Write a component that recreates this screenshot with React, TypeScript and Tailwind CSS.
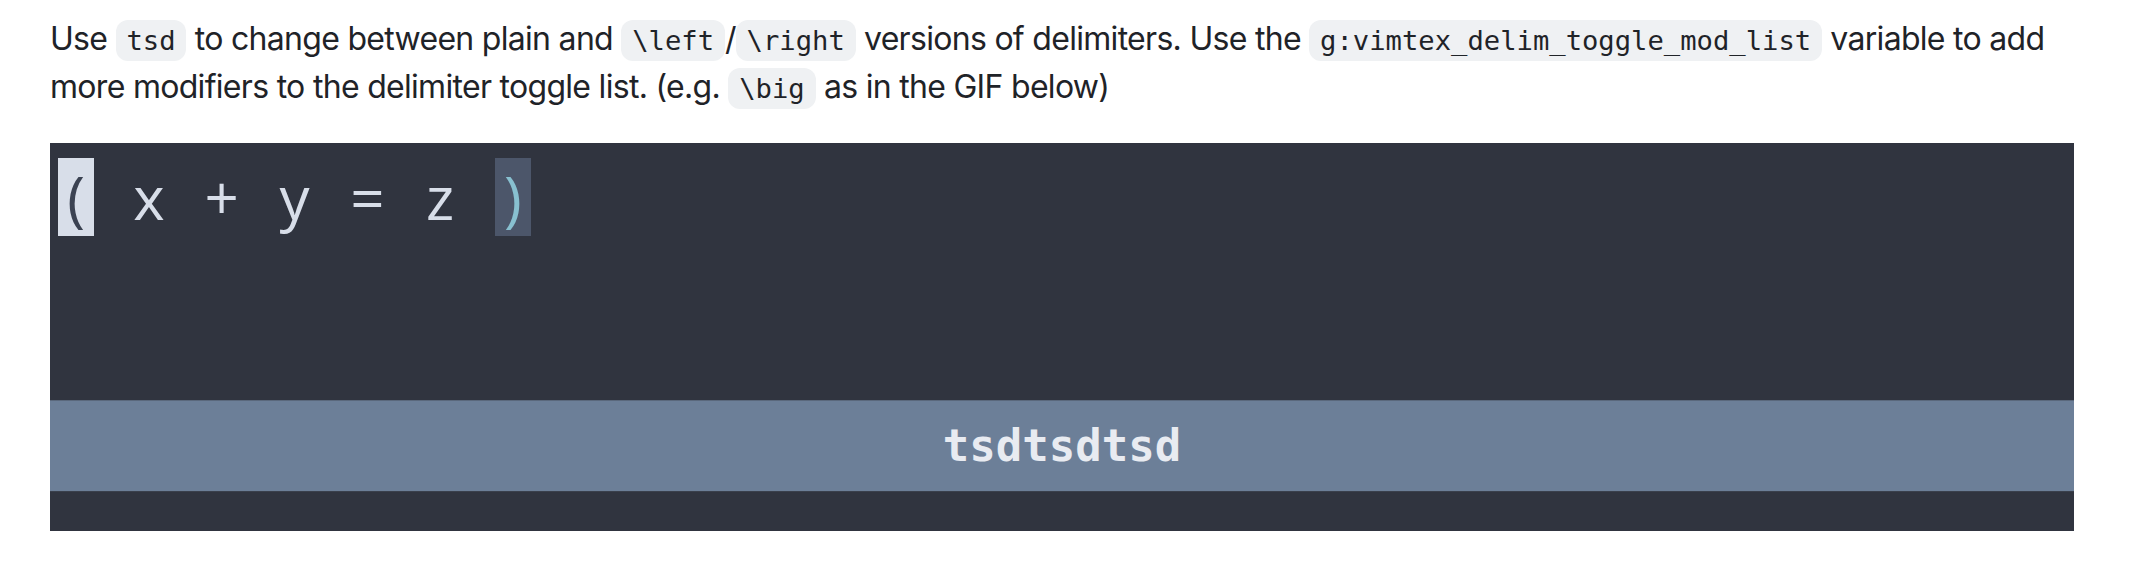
import React from "react";

// Inline code chip, GitHub markdown style (at 2x)
const Code: React.FC<{ children: React.ReactNode }> = ({ children }) => (
  <code className="rounded-[12px] bg-[#eff1f3] px-[0.4em] py-[0.2em] font-['DejaVu_Sans_Mono',monospace] text-[85%] leading-none tracking-normal">
    {children}
  </code>
);

// One terminal cell of the GIF frame
const Cell: React.FC<{ ch: string; className?: string }> = ({
  ch,
  className = "",
}) => (
  <span
    className={`flex h-[78px] w-[36.4px] justify-center leading-[78px] ${className}`}
  >
    {ch}
  </span>
);

const formula = ["x", " ", "+", " ", "y", " ", "=", " ", "z", " "];

const App: React.FC = () => {
  return (
    <div className="h-[566px] w-[2136px] bg-white pl-[50px] pr-[62px] pt-[15px] font-['Inter','Liberation_Sans',sans-serif]">
      <p className="text-[32px] leading-[48px] tracking-[-0.7px] text-[#1f2328]">
        Use <Code>tsd</Code> to change between plain and <Code>\left</Code>/
        <Code>\right</Code> versions of delimiters. Use the{" "}
        <Code>g:vimtex_delim_toggle_mod_list</Code> variable to add more
        modifiers to the delimiter toggle list. (e.g. <Code>\big</Code> as in
        the GIF below)
      </p>

      {/* GIF frame */}
      <div className="mt-[32px] flex h-[388px] flex-col bg-[#30343f]">
        <div className="h-[257px] pl-[8px] pt-[15px]">
          <div className="flex font-['Open_Sans','Noto_Sans',sans-serif] text-[60px] font-normal text-[#d8dee9]">
            <Cell ch="(" className="bg-[#d8dee9] text-[#3b4252]" />
            <Cell ch=" " />
            {formula.map((c, i) => (
              <Cell key={i} ch={c} />
            ))}
            <Cell ch=")" className="bg-[#4c566a] text-[#88c0d0]" />
          </div>
        </div>
        <div className="flex h-[92px] items-center justify-center border-t border-b border-t-[#5a687c] border-b-[#3a404c] bg-[#6c7f98]">
          <span className="font-['DejaVu_Sans_Mono',monospace] text-[44px] font-bold leading-none text-[#e8ebf1]">
            tsdtsdtsd
          </span>
        </div>
        <div className="flex-1" />
      </div>
    </div>
  );
};

export default App;
